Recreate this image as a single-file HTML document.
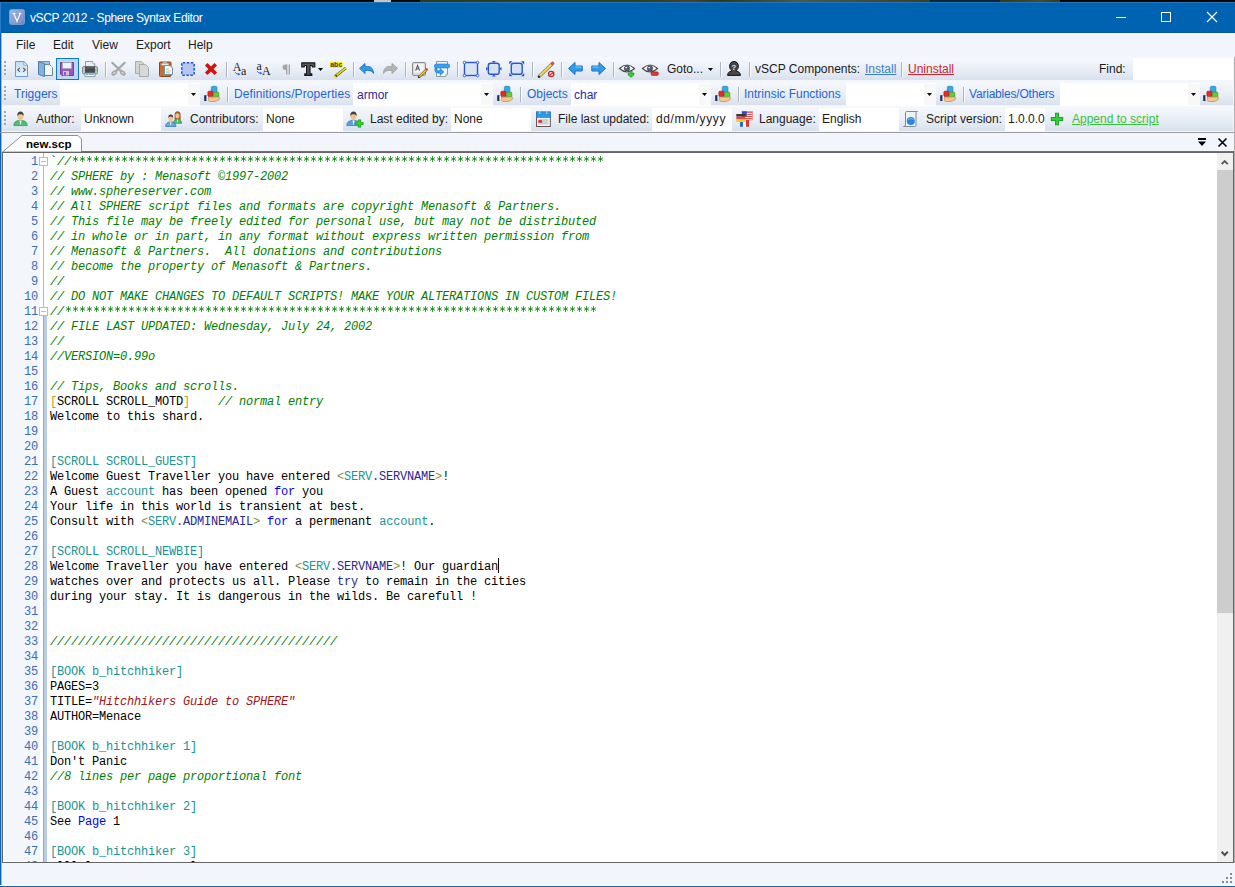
<!DOCTYPE html><html><head><meta charset="utf-8"><style>
*{margin:0;padding:0;box-sizing:border-box}
html,body{width:1235px;height:887px;overflow:hidden;background:#F2F5FB;position:relative;font-family:"Liberation Sans",sans-serif;font-size:12px;color:#1b1b1b}
.t{position:absolute;white-space:pre;line-height:15px}
.code{position:absolute;white-space:pre;font-family:"Liberation Mono",monospace;font-size:12px;letter-spacing:-0.2px;line-height:15px;color:#000}
.ln{position:absolute;font-family:"Liberation Mono",monospace;font-size:12px;letter-spacing:-0.2px;line-height:15px;color:#3A6EB5;text-align:right;width:30px}
.tb{position:absolute;background:linear-gradient(#F6F8FC,#E9EEF6 55%,#D9E1EE);border-radius:2px 0 0 2px}
.grip{position:absolute;width:2px;height:2px;background:#A0A0A0}
.lbl{color:#1F64D6}
.cb{position:absolute;background:#fff}
.cbb{position:absolute;background:#F7F7F7}
</style></head><body><div style="position:absolute;left:0;top:0;width:1235px;height:2px;background:linear-gradient(90deg,#050505 0,#050505 374px,#C4C6C4 374px,#C4C6C4 391px,#080808 391px,#080808 420px,#2E3A1C 420px,#33401E 640px,#4A4028 690px,#2E3A1C 720px,#505848 800px,#3A4020 930px,#0C2838 930px,#0C2838 1000px,#3A3A14 1000px,#4A4830 1040px,#3A3A14 1060px,#0A0606 1060px)"></div><div style="position:absolute;left:0px;top:2px;width:1235px;height:31px;background:#0063B1"></div><div style="position:absolute;left:0px;top:2px;width:1235px;height:1px;background:#1F74BE"></div><div style="position:absolute;left:0px;top:32px;width:1235px;height:1px;background:#0057A9"></div><div style="position:absolute;left:1px;top:33px;width:1234px;height:1px;background:#FFFFFF"></div><div style="position:absolute;left:0px;top:33px;width:1px;height:854px;background:#0A63B3"></div><div style="position:absolute;left:1px;top:33px;width:1px;height:854px;background:#A7B6C8"></div><div style="position:absolute;left:0px;top:885px;width:1235px;height:1px;background:#FCFDFE"></div><div style="position:absolute;left:0px;top:886px;width:1235px;height:1px;background:#0A63B3"></div><svg style="position:absolute;left:9px;top:9px" width="16" height="16"><defs><linearGradient id="gic" x1="0" y1="0" x2="1" y2="1"><stop offset="0" stop-color="#A2B6DE"/><stop offset="1" stop-color="#6C86C0"/></linearGradient></defs><rect x="0.5" y="0.5" width="15" height="15" rx="2" fill="url(#gic)" stroke="#8AA0D0" stroke-width="0.8"/><circle cx="8" cy="8" r="5.6" fill="none" stroke="#8EA4D4" stroke-width="1"/><path d="M3.6 4.4H6.4M9.6 4.4H12.4M4.8 4.4L8 12.2L11.2 4.4" fill="none" stroke="#F4F6FA" stroke-width="1.3"/></svg><div style="position:absolute;left:0px;top:2px;width:1px;height:31px;background:#2A78C4"></div><div class="t" style="left:30px;top:11px;color:#fff;font-size:12px;letter-spacing:-0.38px">vSCP 2012 - Sphere Syntax Editor</div><div style="position:absolute;left:1116px;top:17px;width:10px;height:1px;background:#fff"></div><div style="position:absolute;left:1161px;top:12px;width:10px;height:10px;border:1px solid #fff"></div><svg style="position:absolute;left:1206px;top:11px" width="12" height="12"><path d="M1 1L11 11M11 1L1 11" stroke="#fff" stroke-width="1.1"/></svg><div class="t" style="left:16px;top:38px;color:#1b1b1b">File</div><div class="t" style="left:53px;top:38px;color:#1b1b1b">Edit</div><div class="t" style="left:92px;top:38px;color:#1b1b1b">View</div><div class="t" style="left:136px;top:38px;color:#1b1b1b">Export</div><div class="t" style="left:188px;top:38px;color:#1b1b1b">Help</div><div class="tb" style="left:2px;top:57px;width:1231px;height:23px"></div><div class="tb" style="left:2px;top:81px;width:1231px;height:24px"></div><div class="tb" style="left:2px;top:106px;width:1231px;height:25px"></div><div style="position:absolute;left:4px;top:61px;width:2px;height:2px;background:#A5A5A5"></div><div style="position:absolute;left:4px;top:65px;width:2px;height:2px;background:#A5A5A5"></div><div style="position:absolute;left:4px;top:69px;width:2px;height:2px;background:#A5A5A5"></div><div style="position:absolute;left:4px;top:73px;width:2px;height:2px;background:#A5A5A5"></div><div style="position:absolute;left:4px;top:86px;width:2px;height:2px;background:#A5A5A5"></div><div style="position:absolute;left:4px;top:90px;width:2px;height:2px;background:#A5A5A5"></div><div style="position:absolute;left:4px;top:94px;width:2px;height:2px;background:#A5A5A5"></div><div style="position:absolute;left:4px;top:98px;width:2px;height:2px;background:#A5A5A5"></div><div style="position:absolute;left:4px;top:111px;width:2px;height:2px;background:#A5A5A5"></div><div style="position:absolute;left:4px;top:115px;width:2px;height:2px;background:#A5A5A5"></div><div style="position:absolute;left:4px;top:119px;width:2px;height:2px;background:#A5A5A5"></div><div style="position:absolute;left:4px;top:123px;width:2px;height:2px;background:#A5A5A5"></div><div style="position:absolute;left:0px;top:132px;width:1235px;height:1px;background:#9C9C9C"></div><div class="t" style="left:1099px;top:62px;">Find:</div><div style="position:absolute;left:1133px;top:58px;width:100px;height:22px;background:#fff"></div><div class="t" style="left:667px;top:62px;">Goto...</div><div class="t" style="left:755px;top:62px;">vSCP Components:</div><div class="t" style="left:865px;top:62px;color:#3C7FC8;text-decoration:underline">Install</div><div class="t" style="left:908px;top:62px;color:#C8282E;text-decoration:underline">Uninstall</div><div class="t" style="left:14px;top:87px;color:#1F64D6">Triggers</div><div style="position:absolute;left:60px;top:83px;width:140px;height:23px;background:#fff"></div><div style="position:absolute;left:188px;top:84px;width:12px;height:21px;background:#F8F8F8"></div><svg style="position:absolute;left:191px;top:93px;overflow:visible" width="5" height="3" viewBox="0 0 5 3"><path d="M0 0H5L2.5 3Z" fill="#000"/></svg><div class="t" style="left:234px;top:87px;color:#1F64D6;letter-spacing:0.1px">Definitions/Properties</div><div style="position:absolute;left:353px;top:83px;width:140px;height:23px;background:#fff"></div><div style="position:absolute;left:481px;top:84px;width:12px;height:21px;background:#F8F8F8"></div><svg style="position:absolute;left:484px;top:93px;overflow:visible" width="5" height="3" viewBox="0 0 5 3"><path d="M0 0H5L2.5 3Z" fill="#000"/></svg><div class="t" style="left:357px;top:88px;color:#2A2A9A">armor</div><div class="t" style="left:527px;top:87px;color:#1F64D6">Objects</div><div style="position:absolute;left:571px;top:83px;width:140px;height:23px;background:#fff"></div><div style="position:absolute;left:699px;top:84px;width:12px;height:21px;background:#F8F8F8"></div><svg style="position:absolute;left:702px;top:93px;overflow:visible" width="5" height="3" viewBox="0 0 5 3"><path d="M0 0H5L2.5 3Z" fill="#000"/></svg><div class="t" style="left:574px;top:88px;color:#2A2A9A">char</div><div class="t" style="left:744px;top:87px;color:#1F64D6">Intrinsic Functions</div><div style="position:absolute;left:846px;top:83px;width:90px;height:23px;background:#fff"></div><div style="position:absolute;left:924px;top:84px;width:12px;height:21px;background:#F8F8F8"></div><svg style="position:absolute;left:927px;top:93px;overflow:visible" width="5" height="3" viewBox="0 0 5 3"><path d="M0 0H5L2.5 3Z" fill="#000"/></svg><div class="t" style="left:969px;top:87px;color:#1F64D6;letter-spacing:-0.2px">Variables/Others</div><div style="position:absolute;left:1060px;top:83px;width:140px;height:23px;background:#fff"></div><div style="position:absolute;left:1188px;top:84px;width:12px;height:21px;background:#F8F8F8"></div><svg style="position:absolute;left:1191px;top:93px;overflow:visible" width="5" height="3" viewBox="0 0 5 3"><path d="M0 0H5L2.5 3Z" fill="#000"/></svg><div class="t" style="left:36px;top:112px;">Author:</div><div style="position:absolute;left:81px;top:108px;width:80px;height:23px;background:#fff"></div><div class="t" style="left:84px;top:112px;">Unknown</div><div class="t" style="left:190px;top:112px;">Contributors:</div><div style="position:absolute;left:263px;top:108px;width:80px;height:23px;background:#fff"></div><div class="t" style="left:266px;top:112px;">None</div><div class="t" style="left:370px;top:112px;">Last edited by:</div><div style="position:absolute;left:451px;top:108px;width:80px;height:23px;background:#fff"></div><div class="t" style="left:454px;top:112px;">None</div><div class="t" style="left:558px;top:112px;">File last updated:</div><div style="position:absolute;left:652px;top:108px;width:80px;height:23px;background:#fff"></div><div class="t" style="left:656px;top:112px;letter-spacing:0.6px">dd/mm/yyyy</div><div class="t" style="left:759px;top:112px;">Language:</div><div style="position:absolute;left:819px;top:108px;width:80px;height:23px;background:#fff"></div><div class="t" style="left:822px;top:112px;">English</div><div class="t" style="left:926px;top:112px;">Script version:</div><div style="position:absolute;left:1005px;top:108px;width:40px;height:23px;background:#fff"></div><div class="t" style="left:1008px;top:112px;">1.0.0.0</div><div class="t" style="left:1072px;top:112px;color:#3CC23C;text-decoration:underline">Append to script</div><svg style="position:absolute;left:0;top:132px" width="100" height="21"><path d="M2.5 20 L22 3.5 L78 3.5 L81.5 7 L81.5 20 Z" fill="#fff" stroke="#909090" stroke-width="1"/></svg><div class="t" style="left:26px;top:137px;font-weight:bold;color:#000;font-size:11.5px;letter-spacing:0.1px">new.scp</div><div style="position:absolute;left:81px;top:151px;width:1153px;height:1px;background:#707070"></div><div style="position:absolute;left:2px;top:152px;width:1232px;height:711px;background:#fff;border:1px solid #666"></div><div style="position:absolute;left:4px;top:154px;width:36px;height:707px;background:#F3F6FB"></div><div style="position:absolute;left:3px;top:153px;width:1214px;height:709px;overflow:hidden"><div class="ln" style="left:5px;top:2px">1</div><div class="code" style="left:47px;top:2px">`<span style="color:#008000;font-style:italic;">//                                                                            </span></div><div class="ln" style="left:5px;top:17px">2</div><div class="code" style="left:47px;top:17px"><span style="color:#008000;font-style:italic;">// SPHERE by : Menasoft ©1997-2002</span></div><div class="ln" style="left:5px;top:32px">3</div><div class="code" style="left:47px;top:32px"><span style="color:#008000;font-style:italic;">// www.sphereserver.com</span></div><div class="ln" style="left:5px;top:47px">4</div><div class="code" style="left:47px;top:47px"><span style="color:#008000;font-style:italic;">// All SPHERE script files and formats are copyright Menasoft &amp; Partners.</span></div><div class="ln" style="left:5px;top:62px">5</div><div class="code" style="left:47px;top:62px"><span style="color:#008000;font-style:italic;">// This file may be freely edited for personal use, but may not be distributed</span></div><div class="ln" style="left:5px;top:77px">6</div><div class="code" style="left:47px;top:77px"><span style="color:#008000;font-style:italic;">// in whole or in part, in any format without express written permission from</span></div><div class="ln" style="left:5px;top:92px">7</div><div class="code" style="left:47px;top:92px"><span style="color:#008000;font-style:italic;">// Menasoft &amp; Partners.  All donations and contributions</span></div><div class="ln" style="left:5px;top:107px">8</div><div class="code" style="left:47px;top:107px"><span style="color:#008000;font-style:italic;">// become the property of Menasoft &amp; Partners.</span></div><div class="ln" style="left:5px;top:122px">9</div><div class="code" style="left:47px;top:122px"><span style="color:#008000;font-style:italic;">//</span></div><div class="ln" style="left:5px;top:137px">10</div><div class="code" style="left:47px;top:137px"><span style="color:#008000;font-style:italic;">// DO NOT MAKE CHANGES TO DEFAULT SCRIPTS! MAKE YOUR ALTERATIONS IN CUSTOM FILES!</span></div><div class="ln" style="left:5px;top:152px">11</div><div class="code" style="left:47px;top:152px"><span style="color:#008000;font-style:italic;">//                                                                            </span></div><div class="ln" style="left:5px;top:167px">12</div><div class="code" style="left:47px;top:167px"><span style="color:#008000;font-style:italic;">// FILE LAST UPDATED: Wednesday, July 24, 2002</span></div><div class="ln" style="left:5px;top:182px">13</div><div class="code" style="left:47px;top:182px"><span style="color:#008000;font-style:italic;">//</span></div><div class="ln" style="left:5px;top:197px">14</div><div class="code" style="left:47px;top:197px"><span style="color:#008000;font-style:italic;">//VERSION=0.99o</span></div><div class="ln" style="left:5px;top:212px">15</div><div class="code" style="left:47px;top:212px"></div><div class="ln" style="left:5px;top:227px">16</div><div class="code" style="left:47px;top:227px"><span style="color:#008000;font-style:italic;">// Tips, Books and scrolls.</span></div><div class="ln" style="left:5px;top:242px">17</div><div class="code" style="left:47px;top:242px"><span style="color:#C89A28;">[</span>SCROLL SCROLL_MOTD<span style="color:#C89A28;">]</span>    <span style="color:#008000;font-style:italic;">// normal entry</span></div><div class="ln" style="left:5px;top:257px">18</div><div class="code" style="left:47px;top:257px">Welcome to this shard.</div><div class="ln" style="left:5px;top:272px">19</div><div class="code" style="left:47px;top:272px"></div><div class="ln" style="left:5px;top:287px">20</div><div class="code" style="left:47px;top:287px"></div><div class="ln" style="left:5px;top:302px">21</div><div class="code" style="left:47px;top:302px"><span style="color:#1A9494;">[SCROLL SCROLL_GUEST]</span></div><div class="ln" style="left:5px;top:317px">22</div><div class="code" style="left:47px;top:317px">Welcome Guest Traveller you have entered <span style="color:#8C8C40;">&lt;</span><span style="color:#1A9494;">SERV</span><span style="color:#2A2A8C;">.SERVNAME</span><span style="color:#8C8C40;">&gt;</span>!</div><div class="ln" style="left:5px;top:332px">23</div><div class="code" style="left:47px;top:332px">A Guest <span style="color:#1A9494;">account</span> has been opened <span style="color:#0000FF;">for</span> you</div><div class="ln" style="left:5px;top:347px">24</div><div class="code" style="left:47px;top:347px">Your life in this world is transient at best.</div><div class="ln" style="left:5px;top:362px">25</div><div class="code" style="left:47px;top:362px">Consult with <span style="color:#8C8C40;">&lt;</span><span style="color:#1A9494;">SERV</span><span style="color:#2A2A8C;">.ADMINEMAIL</span><span style="color:#8C8C40;">&gt;</span> <span style="color:#0000FF;">for</span> a permenant <span style="color:#1A9494;">account</span>.</div><div class="ln" style="left:5px;top:377px">26</div><div class="code" style="left:47px;top:377px"></div><div class="ln" style="left:5px;top:392px">27</div><div class="code" style="left:47px;top:392px"><span style="color:#1A9494;">[SCROLL SCROLL_NEWBIE]</span></div><div class="ln" style="left:5px;top:407px">28</div><div class="code" style="left:47px;top:407px">Welcome Traveller you have entered <span style="color:#8C8C40;">&lt;</span><span style="color:#1A9494;">SERV</span><span style="color:#2A2A8C;">.SERVNAME</span><span style="color:#8C8C40;">&gt;</span>! Our guardian</div><div class="ln" style="left:5px;top:422px">29</div><div class="code" style="left:47px;top:422px">watches over and protects us all. Please <span style="color:#2A2A8C;">try</span> to remain in the cities</div><div class="ln" style="left:5px;top:437px">30</div><div class="code" style="left:47px;top:437px">during your stay. It is dangerous in the wilds. Be carefull !</div><div class="ln" style="left:5px;top:452px">31</div><div class="code" style="left:47px;top:452px"></div><div class="ln" style="left:5px;top:467px">32</div><div class="code" style="left:47px;top:467px"></div><div class="ln" style="left:5px;top:482px">33</div><div class="code" style="left:47px;top:482px"><span style="color:#008000;font-style:italic;">/////////////////////////////////////////</span></div><div class="ln" style="left:5px;top:497px">34</div><div class="code" style="left:47px;top:497px"></div><div class="ln" style="left:5px;top:512px">35</div><div class="code" style="left:47px;top:512px"><span style="color:#1A9494;">[BOOK b_hitchhiker]</span></div><div class="ln" style="left:5px;top:527px">36</div><div class="code" style="left:47px;top:527px">PAGES=3</div><div class="ln" style="left:5px;top:542px">37</div><div class="code" style="left:47px;top:542px">TITLE=<span style="color:#A31515;font-style:italic;">&quot;Hitchhikers Guide to SPHERE&quot;</span></div><div class="ln" style="left:5px;top:557px">38</div><div class="code" style="left:47px;top:557px">AUTHOR=Menace</div><div class="ln" style="left:5px;top:572px">39</div><div class="code" style="left:47px;top:572px"></div><div class="ln" style="left:5px;top:587px">40</div><div class="code" style="left:47px;top:587px"><span style="color:#1A9494;">[BOOK b_hitchhiker 1]</span></div><div class="ln" style="left:5px;top:602px">41</div><div class="code" style="left:47px;top:602px">Don't Panic</div><div class="ln" style="left:5px;top:617px">42</div><div class="code" style="left:47px;top:617px"><span style="color:#008000;font-style:italic;">//8 lines per page proportional font</span></div><div class="ln" style="left:5px;top:632px">43</div><div class="code" style="left:47px;top:632px"></div><div class="ln" style="left:5px;top:647px">44</div><div class="code" style="left:47px;top:647px"><span style="color:#1A9494;">[BOOK b_hitchhiker 2]</span></div><div class="ln" style="left:5px;top:662px">45</div><div class="code" style="left:47px;top:662px">See <span style="color:#0000FF;">Page</span> 1</div><div class="ln" style="left:5px;top:677px">46</div><div class="code" style="left:47px;top:677px"></div><div class="ln" style="left:5px;top:692px">47</div><div class="code" style="left:47px;top:692px"><span style="color:#1A9494;">[BOOK b_hitchhiker 3]</span></div><div class="ln" style="left:5px;top:707px">48</div><div class="code" style="left:47px;top:707px">alllalaaaaaaaaaaaaaal</div><svg style="position:absolute;left:68px;top:3px" width="532" height="15"><defs><pattern id="ast0" width="7" height="15" patternUnits="userSpaceOnUse"><path d="M4.5 0V6M2 1.6L7 4.4M2 4.4L7 1.6" stroke="#008000" stroke-opacity="0.8" stroke-width="0.95" fill="none"/></pattern></defs><rect width="532" height="15" fill="url(#ast0)"/></svg><svg style="position:absolute;left:61px;top:153px" width="532" height="15"><defs><pattern id="ast10" width="7" height="15" patternUnits="userSpaceOnUse"><path d="M4.5 0V6M2 1.6L7 4.4M2 4.4L7 1.6" stroke="#008000" stroke-opacity="0.8" stroke-width="0.95" fill="none"/></pattern></defs><rect width="532" height="15" fill="url(#ast10)"/></svg></div><div style="position:absolute;left:43px;top:153px;width:1px;height:4px;background:#A8BEDC"></div><div style="position:absolute;left:43px;top:165px;width:1px;height:142px;background:#A8BEDC"></div><div style="position:absolute;left:43px;top:316px;width:4px;height:546px;background:linear-gradient(90deg,#8EACD4 0,#8EACD4 1px,#B8CDE3 1px)"></div><div style="position:absolute;left:39px;top:157px;width:9px;height:9px;background:#fff;border:1px solid #A8BEDC"><div style="position:absolute;left:1px;top:3px;width:5px;height:1px;background:#A8BEDC"></div></div><div style="position:absolute;left:39px;top:307px;width:9px;height:9px;background:#fff;border:1px solid #A8BEDC"><div style="position:absolute;left:1px;top:3px;width:5px;height:1px;background:#A8BEDC"></div></div><div style="position:absolute;left:498px;top:558px;width:1px;height:15px;background:#000"></div><div style="position:absolute;left:1217px;top:153px;width:16px;height:709px;background:#F0F0F0"></div><div style="position:absolute;left:1217px;top:170px;width:16px;height:443px;background:#CDCDCD"></div><svg style="position:absolute;left:1220px;top:158px" width="10" height="8"><path d="M1.6 6.2L4.7 3L7.8 6.2" fill="none" stroke="#5A5A5A" stroke-width="1.9"/></svg><svg style="position:absolute;left:1220px;top:850px" width="10" height="8"><path d="M1.6 1.8L4.7 5L7.8 1.8" fill="none" stroke="#505050" stroke-width="2"/></svg><svg style="position:absolute;left:1197px;top:137px" width="10" height="10"><rect x="1" y="1" width="8" height="2" fill="#000"/><path d="M1 4.5H9L5 9Z" fill="#000"/></svg><svg style="position:absolute;left:1217px;top:137px" width="11" height="11"><path d="M1.5 1.5L9.5 9.5M9.5 1.5L1.5 9.5" stroke="#000" stroke-width="1.6"/></svg><div style="position:absolute;left:1230px;top:873px;width:2px;height:2px;background:#8A8A8A"></div><div style="position:absolute;left:1226px;top:877px;width:2px;height:2px;background:#8A8A8A"></div><div style="position:absolute;left:1230px;top:877px;width:2px;height:2px;background:#8A8A8A"></div><div style="position:absolute;left:1222px;top:881px;width:2px;height:2px;background:#8A8A8A"></div><div style="position:absolute;left:1226px;top:881px;width:2px;height:2px;background:#8A8A8A"></div><div style="position:absolute;left:1230px;top:881px;width:2px;height:2px;background:#8A8A8A"></div><svg style="position:absolute;left:15px;top:61px;overflow:visible" width="13" height="16" viewBox="0 0 13 16"><defs><linearGradient id="gd1" x1="0" y1="0" x2="0" y2="1"><stop offset="0" stop-color="#C4DAEE"/><stop offset="1" stop-color="#E4F6FB"/></linearGradient></defs><path d="M0.5 0.5H8.8L12.5 4.2V15.5H0.5Z" fill="url(#gd1)" stroke="#6C9ACA"/><path d="M8.8 0.5V4.2H12.5Z" fill="#FFFFFF" stroke="#6C9ACA" stroke-width="0.8"/><path d="M4.8 6.8L2.8 8.8L4.8 10.8M8.2 6.8L10.2 8.8L8.2 10.8" fill="none" stroke="#555" stroke-width="1.1"/></svg><svg style="position:absolute;left:38px;top:61px;overflow:visible" width="15" height="16" viewBox="0 0 15 16"><path d="M0.5 0.5H11.5V13H0.5Z" fill="#A4C4E0" stroke="#6A96BE"/><path d="M6.5 3.5H11.6L14.5 6.4V14.5H6.5Z" fill="#F0F6F2" stroke="#6E8A88"/><path d="M13.5 3.6V6.4H14.5" fill="#fff" stroke="none"/><path d="M0.5 0.5L6.5 2.6V15.6L0.5 13.4Z" fill="#88B0D8" stroke="#4C7EAE"/></svg><div style="position:absolute;left:56px;top:58px;width:23px;height:22px;border:1px solid #0A78D7;background:#BBD9F2"></div><svg style="position:absolute;left:60px;top:62px;overflow:visible" width="14" height="14" viewBox="0 0 14 14"><path d="M0.5 0.5H13.5V13.5H2L0.5 12Z" fill="#9E55C4" stroke="#7A3AA0"/><rect x="2.5" y="0.5" width="9" height="6" fill="#EAF6F6" stroke="#9AB0B0" stroke-width="0.6"/><rect x="3" y="9" width="6" height="4.5" fill="#C8C8C8"/><rect x="4" y="10" width="2" height="3.5" fill="#9E55C4"/></svg><svg style="position:absolute;left:82px;top:61px;overflow:visible" width="16" height="16" viewBox="0 0 16 16"><path d="M3.5 0.5H10.5L12.8 2.8V6H3.5Z" fill="#E4F2F2" stroke="#8AA0A4"/><path d="M10.5 0.5V2.8H12.8" fill="#fff" stroke="#8AA0A4" stroke-width="0.6"/><rect x="0.5" y="5.5" width="15" height="7.5" rx="1.5" fill="#C4C4C8" stroke="#8A8A8A"/><rect x="3" y="5.5" width="10" height="6.8" fill="#4A4B52"/><path d="M3.5 7.5Q8 6 12.5 6.5" stroke="#6A6B72" stroke-width="0.8" fill="none"/><rect x="3" y="12" width="10" height="3.5" fill="#FFFFFF" stroke="#7A8A8A" stroke-width="0.8"/><rect x="4" y="12.6" width="2.5" height="1.1" fill="#3A7AD8"/><rect x="7" y="12.6" width="2.5" height="1.1" fill="#2E9A5A"/><rect x="9.8" y="12.6" width="2" height="1.1" fill="#3A7AD8"/><rect x="13" y="8.5" width="1.5" height="1.5" fill="#30E040"/></svg><div style="position:absolute;left:105px;top:62px;width:1px;height:15px;background:#AEB4BE"></div><div style="position:absolute;left:106px;top:62px;width:1px;height:15px;background:#FDFEFF"></div><svg style="position:absolute;left:111px;top:62px;overflow:visible" width="15" height="14" viewBox="0 0 15 14"><path d="M1.3 0.8L10.2 9.4M13.7 0.8L4.8 9.4" stroke="#A8A8A8" stroke-width="2.2" stroke-linecap="round"/><ellipse cx="3.2" cy="11" rx="3.1" ry="2.3" transform="rotate(-38 3.2 11)" fill="#A6A6A6"/><ellipse cx="11.8" cy="11" rx="3.1" ry="2.3" transform="rotate(38 11.8 11)" fill="#A6A6A6"/><ellipse cx="3.3" cy="10.9" rx="1.4" ry="0.9" transform="rotate(-38 3.3 10.9)" fill="#D6D8DC"/><ellipse cx="11.7" cy="10.9" rx="1.4" ry="0.9" transform="rotate(38 11.7 10.9)" fill="#D6D8DC"/></svg><svg style="position:absolute;left:135px;top:61px;overflow:visible" width="14" height="16" viewBox="0 0 14 16"><path d="M0.5 0.5H6.5L9 3V12.5H0.5Z" fill="#D4D4D4" stroke="#ABABAB"/><path d="M4.5 3.5H10.5L13.5 6.5V15.5H4.5Z" fill="#D8D8D8" stroke="#A8A8A8"/></svg><svg style="position:absolute;left:159px;top:61px;overflow:visible" width="14" height="16" viewBox="0 0 14 16"><rect x="0.5" y="1" width="11.5" height="14.5" rx="1" fill="#C46E30" stroke="#8A4620"/><rect x="2.5" y="2.5" width="7" height="1.8" fill="#E8EEF0"/><rect x="4" y="0" width="4" height="2" fill="#B0B0B0"/><path d="M5.5 4.5H11L13.5 7V13.5H5.5Z" fill="#F4FAF8" stroke="#7A9090"/><path d="M7 8H10M7 10H11.5M7 11.8H11" stroke="#A8B8B8" stroke-width="0.8"/></svg><svg style="position:absolute;left:181px;top:62px;overflow:visible" width="14" height="14" viewBox="0 0 14 14"><rect x="0.8" y="0.8" width="12.4" height="12.4" rx="1" fill="#B4C6F2" stroke="#2350D6" stroke-width="1.5" stroke-dasharray="2.4 1.6"/></svg><svg style="position:absolute;left:205px;top:63px;overflow:visible" width="12" height="12" viewBox="0 0 12 12"><path d="M1.2 1.2L10.8 10.8M10.8 1.2L1.2 10.8" stroke="#D41010" stroke-width="3.6"/></svg><div style="position:absolute;left:226px;top:62px;width:1px;height:15px;background:#AEB4BE"></div><div style="position:absolute;left:227px;top:62px;width:1px;height:15px;background:#FDFEFF"></div><svg style="position:absolute;left:233px;top:62px;overflow:visible" width="15" height="14" viewBox="0 0 15 14"><text x="-0.3" y="8.6" font-family="Liberation Serif" font-size="12" fill="#202020">A</text><text x="8" y="13.2" font-family="Liberation Serif" font-size="12" fill="#202020">a</text><path d="M2.3 10.3Q3.2 12.3 5.6 12.2" fill="none" stroke="#2A50E0" stroke-width="1"/><path d="M5.2 10.7L7.4 12.2L5.2 13.5Z" fill="#2A50E0"/></svg><svg style="position:absolute;left:256px;top:62px;overflow:visible" width="15" height="14" viewBox="0 0 15 14"><text x="0.5" y="8" font-family="Liberation Serif" font-size="12" fill="#202020">a</text><text x="6" y="13.2" font-family="Liberation Serif" font-size="12" fill="#202020">A</text><path d="M1.3 9.3Q2.2 11.3 4.6 11.2" fill="none" stroke="#2A50E0" stroke-width="1"/><path d="M4.2 9.7L6.4 11.2L4.2 12.5Z" fill="#2A50E0"/></svg><svg style="position:absolute;left:282px;top:64px;overflow:visible" width="9" height="11" viewBox="0 0 9 11"><path d="M8.3 0.5H3.5C1.6 0.5 0.5 1.6 0.5 3.2C0.5 4.8 1.6 5.9 3.5 5.9H4.3V0.5Z" fill="#A6A6A6"/><path d="M4.7 0.5V10.5M7.3 0.5V10.5" stroke="#A6A6A6" stroke-width="1.4"/></svg><svg style="position:absolute;left:301px;top:62px;overflow:visible" width="15" height="14" viewBox="0 0 15 14"><path d="M0.8 0.8H13.8V5H11.5L10.8 3.5H9V11.8H10.8V13.4H3.8V11.8H5.6V3.5H3.8L3.1 5H0.8Z" fill="#585860" stroke="#181818" stroke-width="1.2" stroke-linejoin="round"/></svg><svg style="position:absolute;left:318px;top:68px;overflow:visible" width="5" height="3" viewBox="0 0 5 3"><path d="M0 0H5L2.5 3Z" fill="#000"/></svg><svg style="position:absolute;left:330px;top:61px;overflow:visible" width="17" height="17" viewBox="0 0 17 17"><rect x="0" y="1" width="12.5" height="5.6" fill="#F2F000"/><text x="0.2" y="6.3" font-family="Liberation Sans" font-weight="bold" font-size="6.8" fill="#383838" textLength="12">abc</text><path d="M15.8 7L5.2 15.4" stroke="#4A4A30" stroke-width="2.8"/><path d="M15.9 6.9L6.6 14.2" stroke="#ECE600" stroke-width="1.7"/><circle cx="4.8" cy="15.6" r="1.1" fill="#E8E200"/></svg><div style="position:absolute;left:353px;top:62px;width:1px;height:15px;background:#AEB4BE"></div><div style="position:absolute;left:354px;top:62px;width:1px;height:15px;background:#FDFEFF"></div><svg style="position:absolute;left:359px;top:63px;overflow:visible" width="15" height="11" viewBox="0 0 15 11"><path d="M0.5 5.3L6 0.5V3.4H8.5C12 3.4 14.5 6 14.5 10.5C13.5 8.3 11.5 7.4 8.5 7.4H6V10.5Z" fill="#2E9AE8" stroke="#1E70C0" stroke-width="0.9" stroke-linejoin="round"/></svg><svg style="position:absolute;left:383px;top:63px;overflow:visible" width="15" height="11" viewBox="0 0 15 11"><path d="M14.5 5.3L9 0.5V3.4H6.5C3 3.4 0.5 6 0.5 10.5C1.5 8.3 3.5 7.4 6.5 7.4H9V10.5Z" fill="#B4B4B4" stroke="#A0A0A0" stroke-width="0.9" stroke-linejoin="round"/></svg><div style="position:absolute;left:405px;top:62px;width:1px;height:15px;background:#AEB4BE"></div><div style="position:absolute;left:406px;top:62px;width:1px;height:15px;background:#FDFEFF"></div><svg style="position:absolute;left:412px;top:62px;overflow:visible" width="16" height="16" viewBox="0 0 16 16"><rect x="0.5" y="0.5" width="13" height="13" rx="1.5" fill="#DCDCDC" stroke="#8A8A8A"/><rect x="2.3" y="2" width="9.4" height="8.6" fill="#F4F4F4"/><path d="M3.6 8.6L5.6 3.6L7.6 8.6M4.3 7H6.9" fill="none" stroke="#5A5A5A" stroke-width="1.1"/><path d="M14.6 7.6L6.8 15.2" stroke="#4A4420" stroke-width="2.6"/><path d="M14.6 7.6L7.2 14.8" stroke="#E8D040" stroke-width="1.6"/><circle cx="14.6" cy="7.4" r="1.2" fill="#E03030"/><circle cx="6.6" cy="15.3" r="0.8" fill="#111"/></svg><svg style="position:absolute;left:434px;top:61px;overflow:visible" width="16" height="16" viewBox="0 0 16 16"><path d="M2.5 0.5H13.5V13.5L11.5 15.5H2.5Z" fill="#F0F6F4" stroke="#8A9A9A"/><path d="M11.8 15.2V13.3H13.4" fill="#D8E4E2" stroke="#8A9A9A" stroke-width="0.6"/><rect x="0.3" y="3" width="15.4" height="4" rx="2" fill="#34A2EC" stroke="#1A78D0" stroke-width="0.6"/><path d="M0.8 7.6C0.6 10.6 1.8 12 4.4 12H6.2V14.3L9.8 10.9L6.2 7.5V9.7H4.4C3.2 9.7 2.9 8.9 2.9 7.6Z" fill="#34A2EC" stroke="#1A78D0" stroke-width="0.7" stroke-linejoin="round"/></svg><div style="position:absolute;left:457px;top:62px;width:1px;height:15px;background:#AEB4BE"></div><div style="position:absolute;left:458px;top:62px;width:1px;height:15px;background:#FDFEFF"></div><svg style="position:absolute;left:463px;top:61px;overflow:visible" width="17" height="17" viewBox="0 0 17 17"><rect x="1.5" y="1.5" width="13" height="13" fill="#D8E6F4" stroke="#2B55D0" stroke-width="1.4"/><circle cx="1.5" cy="1.5" r="1.3" fill="#fff" stroke="#2B55D0" stroke-width="0.9"/><circle cx="14.5" cy="1.5" r="1.3" fill="#fff" stroke="#2B55D0" stroke-width="0.9"/><circle cx="1.5" cy="14.5" r="1.3" fill="#fff" stroke="#2B55D0" stroke-width="0.9"/><circle cx="14.5" cy="14.5" r="1.3" fill="#fff" stroke="#2B55D0" stroke-width="0.9"/></svg><svg style="position:absolute;left:486px;top:61px;overflow:visible" width="16" height="16" viewBox="0 0 16 16"><rect x="2.3" y="2.3" width="10.9" height="10.9" rx="2.2" fill="#D4E2F2" stroke="#2B55D0" stroke-width="1.4"/><path d="M5.8 0H9.8L7.8 2Z M5.8 15.5H9.8L7.8 13.5Z M0 5.8V9.8L2 7.8Z M15.5 5.8V9.8L13.5 7.8Z" fill="#2B55D0"/></svg><svg style="position:absolute;left:509px;top:61px;overflow:visible" width="16" height="16" viewBox="0 0 16 16"><rect x="2.3" y="2.3" width="10.9" height="10.9" rx="2.2" fill="#D4E2F2" stroke="#2B55D0" stroke-width="1.4"/><path d="M0.3 0.3H3.5L0.3 3.5Z M15.2 0.3H12L15.2 3.5Z M0.3 15.2H3.5L0.3 12Z M15.2 15.2H12L15.2 12Z" fill="#2B55D0"/></svg><div style="position:absolute;left:532px;top:62px;width:1px;height:15px;background:#AEB4BE"></div><div style="position:absolute;left:533px;top:62px;width:1px;height:15px;background:#FDFEFF"></div><svg style="position:absolute;left:538px;top:61px;overflow:visible" width="17" height="17" viewBox="0 0 17 17"><path d="M14.2 2.8L1.2 15.3" stroke="#6A6030" stroke-width="3.2" stroke-linecap="round"/><path d="M14.2 2.8L1.5 15" stroke="#EEDC68" stroke-width="2.1"/><path d="M13.3 3.7L15.7 1.3" stroke="#E04848" stroke-width="2.8"/><circle cx="0.9" cy="15.6" r="0.9" fill="#111"/><circle cx="13.2" cy="13" r="2.6" fill="#fff" stroke="#C02A2A" stroke-width="1.4"/><path d="M11.5 14.5L14.9 11.5" stroke="#C02A2A" stroke-width="1.2"/></svg><div style="position:absolute;left:561px;top:62px;width:1px;height:15px;background:#AEB4BE"></div><div style="position:absolute;left:562px;top:62px;width:1px;height:15px;background:#FDFEFF"></div><svg style="position:absolute;left:568px;top:62px;overflow:visible" width="15" height="13" viewBox="0 0 15 13"><path d="M0.5 6.5L7 0.5V4H14.2V9H7V12.5Z" fill="#2E9EEA" stroke="#1E6EC4" stroke-linejoin="round"/><path d="M7.5 5H13.5" stroke="#8CD0F8" stroke-width="1"/></svg><svg style="position:absolute;left:591px;top:62px;overflow:visible" width="15" height="13" viewBox="0 0 15 13"><path d="M14.5 6.5L8 0.5V4H0.8V9H8V12.5Z" fill="#2E9EEA" stroke="#1E6EC4" stroke-linejoin="round"/><path d="M1.5 5H7.5" stroke="#8CD0F8" stroke-width="1"/></svg><div style="position:absolute;left:613px;top:62px;width:1px;height:15px;background:#AEB4BE"></div><div style="position:absolute;left:614px;top:62px;width:1px;height:15px;background:#FDFEFF"></div><svg style="position:absolute;left:619px;top:63px;overflow:visible" width="17" height="15" viewBox="0 0 17 15"><path d="M0.5 5.5Q8 -1.5 15.5 5.5Q8 12.5 0.5 5.5Z" fill="#FAFAFA" stroke="#4A4A4A" stroke-width="1.1"/><circle cx="8" cy="5.5" r="2.7" fill="#5C5E78" stroke="#333" stroke-width="0.6"/><circle cx="7.2" cy="4.5" r="0.8" fill="#fff"/><path d="M12 8V14.3M8.8 11.2H15.2" stroke="#1A9A1A" stroke-width="2.8"/><path d="M12 8.6V13.7M9.4 11.2H14.6" stroke="#30D030" stroke-width="1.5"/></svg><svg style="position:absolute;left:642px;top:63px;overflow:visible" width="17" height="14" viewBox="0 0 17 14"><path d="M0.5 5.5Q8 -1.5 15.5 5.5Q8 12.5 0.5 5.5Z" fill="#FAFAFA" stroke="#4A4A4A" stroke-width="1.1"/><circle cx="8" cy="5.5" r="2.7" fill="#5C5E78" stroke="#333" stroke-width="0.6"/><circle cx="7.2" cy="4.5" r="0.8" fill="#fff"/><rect x="9.2" y="9" width="7" height="3.3" rx="0.8" fill="#E03A3A" stroke="#A81C1C" stroke-width="0.8"/></svg><svg style="position:absolute;left:708px;top:68px;overflow:visible" width="5" height="3" viewBox="0 0 5 3"><path d="M0 0H5L2.5 3Z" fill="#000"/></svg><div style="position:absolute;left:720px;top:62px;width:1px;height:15px;background:#AEB4BE"></div><div style="position:absolute;left:721px;top:62px;width:1px;height:15px;background:#FDFEFF"></div><svg style="position:absolute;left:727px;top:61px;overflow:visible" width="14" height="15" viewBox="0 0 14 15"><path d="M7 0.5C4.3 0.5 2.6 2.5 2.6 5.3C2.6 7.3 3.6 8.6 4.6 9.3V10C2.2 10.6 0.6 12 0.6 14.4H13.4C13.4 12 11.8 10.6 9.4 10V9.3C10.4 8.6 11.4 7.3 11.4 5.3C11.4 2.5 9.7 0.5 7 0.5Z" fill="#474747" stroke="#111" stroke-width="1"/><text x="4.6" y="9.2" font-family="Liberation Sans" font-weight="bold" font-size="7.5" fill="#E8E8E8">?</text></svg><div style="position:absolute;left:749px;top:62px;width:1px;height:15px;background:#AEB4BE"></div><div style="position:absolute;left:750px;top:62px;width:1px;height:15px;background:#FDFEFF"></div><div style="position:absolute;left:901px;top:62px;width:1px;height:15px;background:#AEB4BE"></div><div style="position:absolute;left:902px;top:62px;width:1px;height:15px;background:#FDFEFF"></div><svg style="position:absolute;left:204px;top:86px;overflow:visible" width="17" height="17" viewBox="0 0 17 17"><rect x="7.3" y="0.3" width="5.6" height="6.4" rx="1.4" fill="#34A8E8" stroke="#2080C0" stroke-width="0.7"/><rect x="3.9" y="5.2" width="5.2" height="5.4" rx="1.1" fill="#E42A2A" stroke="#B01818" stroke-width="0.7"/><rect x="9.4" y="6.1" width="5.4" height="5.4" rx="1.1" fill="#66C840" stroke="#3E9822" stroke-width="0.7"/><path d="M4.2 11C6.5 10.6 9.5 11.4 12 11C13.8 10.7 15.8 11 15.8 12.6C14.8 14.6 11 15.8 7.5 15.6C6 15.5 4.6 15 4.2 14.3Z" fill="#F2C890" stroke="#B88048" stroke-width="0.7"/><rect x="0.2" y="9.2" width="2.4" height="5.8" fill="#1E2A60"/><rect x="2.6" y="9.8" width="1.2" height="4.8" fill="#F0F0F0"/></svg><svg style="position:absolute;left:497px;top:86px;overflow:visible" width="17" height="17" viewBox="0 0 17 17"><rect x="7.3" y="0.3" width="5.6" height="6.4" rx="1.4" fill="#34A8E8" stroke="#2080C0" stroke-width="0.7"/><rect x="3.9" y="5.2" width="5.2" height="5.4" rx="1.1" fill="#E42A2A" stroke="#B01818" stroke-width="0.7"/><rect x="9.4" y="6.1" width="5.4" height="5.4" rx="1.1" fill="#66C840" stroke="#3E9822" stroke-width="0.7"/><path d="M4.2 11C6.5 10.6 9.5 11.4 12 11C13.8 10.7 15.8 11 15.8 12.6C14.8 14.6 11 15.8 7.5 15.6C6 15.5 4.6 15 4.2 14.3Z" fill="#F2C890" stroke="#B88048" stroke-width="0.7"/><rect x="0.2" y="9.2" width="2.4" height="5.8" fill="#1E2A60"/><rect x="2.6" y="9.8" width="1.2" height="4.8" fill="#F0F0F0"/></svg><svg style="position:absolute;left:715px;top:86px;overflow:visible" width="17" height="17" viewBox="0 0 17 17"><rect x="7.3" y="0.3" width="5.6" height="6.4" rx="1.4" fill="#34A8E8" stroke="#2080C0" stroke-width="0.7"/><rect x="3.9" y="5.2" width="5.2" height="5.4" rx="1.1" fill="#E42A2A" stroke="#B01818" stroke-width="0.7"/><rect x="9.4" y="6.1" width="5.4" height="5.4" rx="1.1" fill="#66C840" stroke="#3E9822" stroke-width="0.7"/><path d="M4.2 11C6.5 10.6 9.5 11.4 12 11C13.8 10.7 15.8 11 15.8 12.6C14.8 14.6 11 15.8 7.5 15.6C6 15.5 4.6 15 4.2 14.3Z" fill="#F2C890" stroke="#B88048" stroke-width="0.7"/><rect x="0.2" y="9.2" width="2.4" height="5.8" fill="#1E2A60"/><rect x="2.6" y="9.8" width="1.2" height="4.8" fill="#F0F0F0"/></svg><svg style="position:absolute;left:940px;top:86px;overflow:visible" width="17" height="17" viewBox="0 0 17 17"><rect x="7.3" y="0.3" width="5.6" height="6.4" rx="1.4" fill="#34A8E8" stroke="#2080C0" stroke-width="0.7"/><rect x="3.9" y="5.2" width="5.2" height="5.4" rx="1.1" fill="#E42A2A" stroke="#B01818" stroke-width="0.7"/><rect x="9.4" y="6.1" width="5.4" height="5.4" rx="1.1" fill="#66C840" stroke="#3E9822" stroke-width="0.7"/><path d="M4.2 11C6.5 10.6 9.5 11.4 12 11C13.8 10.7 15.8 11 15.8 12.6C14.8 14.6 11 15.8 7.5 15.6C6 15.5 4.6 15 4.2 14.3Z" fill="#F2C890" stroke="#B88048" stroke-width="0.7"/><rect x="0.2" y="9.2" width="2.4" height="5.8" fill="#1E2A60"/><rect x="2.6" y="9.8" width="1.2" height="4.8" fill="#F0F0F0"/></svg><svg style="position:absolute;left:1203px;top:86px;overflow:visible" width="17" height="17" viewBox="0 0 17 17"><rect x="7.3" y="0.3" width="5.6" height="6.4" rx="1.4" fill="#34A8E8" stroke="#2080C0" stroke-width="0.7"/><rect x="3.9" y="5.2" width="5.2" height="5.4" rx="1.1" fill="#E42A2A" stroke="#B01818" stroke-width="0.7"/><rect x="9.4" y="6.1" width="5.4" height="5.4" rx="1.1" fill="#66C840" stroke="#3E9822" stroke-width="0.7"/><path d="M4.2 11C6.5 10.6 9.5 11.4 12 11C13.8 10.7 15.8 11 15.8 12.6C14.8 14.6 11 15.8 7.5 15.6C6 15.5 4.6 15 4.2 14.3Z" fill="#F2C890" stroke="#B88048" stroke-width="0.7"/><rect x="0.2" y="9.2" width="2.4" height="5.8" fill="#1E2A60"/><rect x="2.6" y="9.8" width="1.2" height="4.8" fill="#F0F0F0"/></svg><div style="position:absolute;left:227px;top:87px;width:1px;height:15px;background:#AEB4BE"></div><div style="position:absolute;left:228px;top:87px;width:1px;height:15px;background:#FDFEFF"></div><div style="position:absolute;left:520px;top:87px;width:1px;height:15px;background:#AEB4BE"></div><div style="position:absolute;left:521px;top:87px;width:1px;height:15px;background:#FDFEFF"></div><div style="position:absolute;left:738px;top:87px;width:1px;height:15px;background:#AEB4BE"></div><div style="position:absolute;left:739px;top:87px;width:1px;height:15px;background:#FDFEFF"></div><div style="position:absolute;left:963px;top:87px;width:1px;height:15px;background:#AEB4BE"></div><div style="position:absolute;left:964px;top:87px;width:1px;height:15px;background:#FDFEFF"></div><svg style="position:absolute;left:13px;top:111px;overflow:visible" width="15" height="15" viewBox="0 0 15 15"><path d="M0.8 14.6C0.8 11.6 2.5 10.2 5.3 9.6H9.7C12.5 10.2 14.2 11.6 14.2 14.6Z" fill="#52BC7C" stroke="#2A9048" stroke-width="0.7"/><path d="M6.4 9.6L7.5 14.6L8.6 9.6Z" fill="#fff"/><ellipse cx="7.5" cy="5.6" rx="2.9" ry="3.7" fill="#F2C490"/><path d="M4.3 5.2C4 2 5.5 0.5 7.5 0.5C9.5 0.5 11 2 10.7 5.2C10 3.7 9 3.2 7.5 3.2C6 3.2 5 3.7 4.3 5.2Z" fill="#404040"/></svg><svg style="position:absolute;left:165px;top:111px;overflow:visible" width="17" height="16" viewBox="0 0 17 16"><path d="M8.2 12.3C8.2 10 9.5 9 11.3 8.6H13.7C15.5 9 16.6 10 16.6 12.3Z" fill="#52BC7C" stroke="#2A9050" stroke-width="0.7"/><path d="M12 8.6L12.5 12.3L13 8.6Z" fill="#fff"/><path d="M9.6 4C9.6 1.6 10.8 0.3 12.5 0.3C14.3 0.3 15.6 1.6 15.6 4V9.2C14.8 8.4 13.8 8.2 12.5 8.2C11.2 8.2 10.3 8.4 9.6 9.2Z" fill="#A65424"/><ellipse cx="12.4" cy="4.9" rx="2.1" ry="2.7" fill="#F2C490"/><path d="M0.6 15.5C0.6 12.8 2 11.5 4.5 11H7C9.5 11.5 10.9 12.8 10.9 15.5Z" fill="#64A8E4" stroke="#2A70B8" stroke-width="0.7"/><path d="M5.1 11L5.75 15.5L6.4 11Z" fill="#fff"/><ellipse cx="5.75" cy="7.6" rx="2.3" ry="3" fill="#F2C490"/><path d="M3.3 7.2C3.1 4.6 4.3 3.5 5.75 3.5C7.3 3.5 8.4 4.6 8.2 7.2C7.6 6 6.8 5.6 5.75 5.6C4.7 5.6 3.9 6 3.3 7.2Z" fill="#383838"/></svg><svg style="position:absolute;left:346px;top:111px;overflow:visible" width="15" height="15" viewBox="0 0 15 15"><path d="M0.8 14.6C0.8 11.6 2.5 10.2 5.3 9.6H9.7C12.5 10.2 14.2 11.6 14.2 14.6Z" fill="#5AA0E0" stroke="#2A70B8" stroke-width="0.7"/><path d="M6.4 9.6L7.5 14.6L8.6 9.6Z" fill="#fff"/><ellipse cx="7.5" cy="5.6" rx="2.9" ry="3.7" fill="#F2C490"/><path d="M4.3 5.2C4 2 5.5 0.5 7.5 0.5C9.5 0.5 11 2 10.7 5.2C10 3.7 9 3.2 7.5 3.2C6 3.2 5 3.7 4.3 5.2Z" fill="#404040"/></svg><svg style="position:absolute;left:355px;top:119px;overflow:visible" width="9" height="9" viewBox="0 0 9 9"><path d="M4.5 0.5V8.5M0.5 4.5H8.5" stroke="#1A9A1A" stroke-width="3.2"/><path d="M4.5 1.2V7.8M1.2 4.5H7.8" stroke="#30D830" stroke-width="1.8"/></svg><svg style="position:absolute;left:536px;top:111px;overflow:visible" width="15" height="16" viewBox="0 0 15 16"><rect x="0.5" y="1" width="13.8" height="14.5" fill="#F4FAFA" stroke="#6A5050" stroke-width="1"/><rect x="0.5" y="1" width="13.8" height="5.5" fill="#2A9AE8" stroke="#1E7AC8" stroke-width="0.6"/><rect x="3" y="0" width="1.3" height="3" fill="#C0C0C0"/><rect x="10" y="0" width="1.3" height="3" fill="#C0C0C0"/><rect x="2.3" y="7.8" width="10" height="5.8" fill="#C8D4D4"/><rect x="2.3" y="9.2" width="3.8" height="2.5" fill="#E02828"/></svg><svg style="position:absolute;left:736px;top:111px;overflow:visible" width="17" height="16" viewBox="0 0 17 16"><rect x="6" y="0.3" width="10.3" height="8.7" fill="#fff" stroke="#E03030" stroke-width="0.4"/><path d="M6 1.3H16.3M6 3.4H16.3M6 5.5H16.3M6 7.6H16.3" stroke="#E84040" stroke-width="1"/><rect x="6" y="0.3" width="4.8" height="4.8" fill="#2A50D0"/><rect x="0.3" y="3" width="9" height="2.6" fill="#3A3A3A"/><rect x="0.3" y="5.6" width="9" height="2.6" fill="#E84848"/><rect x="0.3" y="8.2" width="9" height="2.8" fill="#F8D020"/><rect x="4" y="11" width="3" height="4.8" fill="#2A6AC8"/><rect x="7" y="11" width="3" height="4.8" fill="#F4F4F4"/><rect x="10" y="9" width="3" height="6.8" fill="#E03838"/></svg><svg style="position:absolute;left:903px;top:111px;overflow:visible" width="16" height="17" viewBox="0 0 16 17"><path d="M2.5 1.5C2.5 0.8 3 0.5 3.5 0.5H14.5C13.5 0.8 13 1.2 13 2V14.5C13 15.5 12.5 15.5 11.5 15.5H0.5C1.5 15.2 2.5 14.8 2.5 14Z" fill="#EEF4F2" stroke="#7A8C8C" stroke-width="1"/><circle cx="7.8" cy="10" r="4" fill="#2A86DC"/><path d="M5 8.5Q7.8 6.5 10.6 8.5" stroke="#8CCCF4" stroke-width="0.8" fill="none"/></svg><svg style="position:absolute;left:1050px;top:112px;overflow:visible" width="14" height="14" viewBox="0 0 14 14"><path d="M7 0.8V13.2M0.8 7H13.2" stroke="#1E941E" stroke-width="4"/><path d="M7 1.6V12.4M1.6 7H12.4" stroke="#38CC44" stroke-width="2.6"/></svg><div style="position:absolute;left:1234px;top:57px;width:1px;height:806px;background:#B0B0B0"></div></body></html>
